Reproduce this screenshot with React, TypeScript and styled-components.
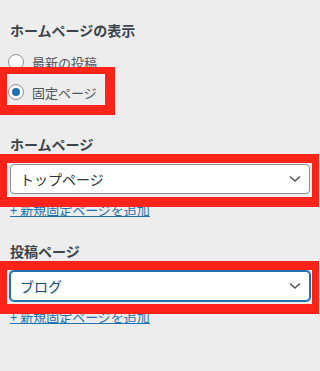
import styled, { createGlobalStyle } from 'styled-components'

const GlobalStyle = createGlobalStyle`
  html, body {
    margin: 0;
    background: #ededed;
  }
  body {
    font-family: "Noto Sans CJK JP", "Noto Sans", sans-serif;
  }
`

const Page = styled.div`
  width: 320px;
  height: 371px;
  box-sizing: border-box;
  padding: 20px 10px 0;
  display: flex;
  flex-direction: column;
`

const Heading = styled.h3<{ $gap?: number }>`
  margin: ${({ $gap }) => $gap ?? 0}px 0 0;
  font-size: 14px;
  line-height: 20px;
  font-weight: 700;
  color: #3c434a;
`

const RadioList = styled.div`
  display: flex;
  flex-direction: column;
  gap: 10px;
  margin: 12px 0 0 -2px;
`

const RadioRow = styled.label`
  position: relative;
  display: flex;
  align-items: center;
  gap: 8px;
  height: 20px;
  width: fit-content;
  font-size: 13px;
  color: #50575e;
`

const Radio = styled.span<{ $checked?: boolean }>`
  width: 16px;
  height: 16px;
  box-sizing: border-box;
  border-radius: 50%;
  border: 1px solid #8c8f94;
  background: #fff;
  display: flex;
  align-items: center;
  justify-content: center;
  &::after {
    content: '';
    width: 8px;
    height: 8px;
    border-radius: 50%;
    background: ${({ $checked }) => ($checked ? '#2271b1' : 'transparent')};
  }
`

// red annotation frame laid over the screenshot
const Mark = styled.span<{ $inset: string; $widths: string; $size?: string }>`
  position: absolute;
  ${({ $inset }) => $inset};
  ${({ $size }) => $size ?? ''};
  border-style: solid;
  border-color: #ff2419;
  border-width: ${({ $widths }) => $widths};
  z-index: 2;
  pointer-events: none;
`

const SelectWrap = styled.div`
  position: relative;
  margin-top: 10px;
`

const Select = styled.div<{ $focus?: boolean }>`
  height: 30px;
  box-sizing: border-box;
  display: flex;
  align-items: center;
  justify-content: space-between;
  padding: 0 8px 0 9px;
  background: #fff;
  border: 1px solid ${({ $focus }) => ($focus ? '#2271b1' : '#8c8f94')};
  box-shadow: ${({ $focus }) => ($focus ? '0 0 0 1px #2271b1' : 'none')};
  border-radius: 4px;
  font-size: 14px;
  color: ${({ $focus }) => ($focus ? '#0a4b78' : '#2c3338')};
`

const AddLink = styled.a`
  margin-top: 7px;
  font-size: 13px;
  line-height: 18px;
  color: #2271b1;
  text-decoration: underline;
  width: fit-content;
`

const Chevron = () => (
  <svg width="12" height="8" viewBox="0 0 12 8">
    <path d="M1 1.5 L6 6 L11 1.5" fill="none" stroke="#50575e" strokeWidth="1.6" />
  </svg>
)

const selectMark = 'top: -10px; left: -10px; right: -9px; bottom: -13px;'

export default function App() {
  return (
    <>
      <GlobalStyle />
      <Page>
        <Heading>ホームページの表示</Heading>
        <RadioList>
          <RadioRow>
            <Radio />
            最新の投稿
          </RadioRow>
          <RadioRow>
            <Radio $checked />
            固定ページ
            <Mark
              $inset="top: -15px; left: -8px;"
              $size="width: 115px; height: 48px; box-sizing: border-box;"
              $widths="7px 10px 10px 7px"
            />
          </RadioRow>
        </RadioList>

        <Heading $gap={32}>ホームページ</Heading>
        <SelectWrap>
          <Select>
            トップページ
            <Chevron />
          </Select>
          <Mark $inset={selectMark} $widths="9px 7px 10px 7px" />
        </SelectWrap>
        <AddLink href="#">+ 新規固定ページを追加</AddLink>

        <Heading $gap={22}>投稿ページ</Heading>
        <SelectWrap>
          <Select $focus>
            ブログ
            <Chevron />
          </Select>
          <Mark $inset={selectMark} $widths="9px 7px 10px 7px" />
        </SelectWrap>
        <AddLink href="#">+ 新規固定ページを追加</AddLink>
      </Page>
    </>
  )
}
